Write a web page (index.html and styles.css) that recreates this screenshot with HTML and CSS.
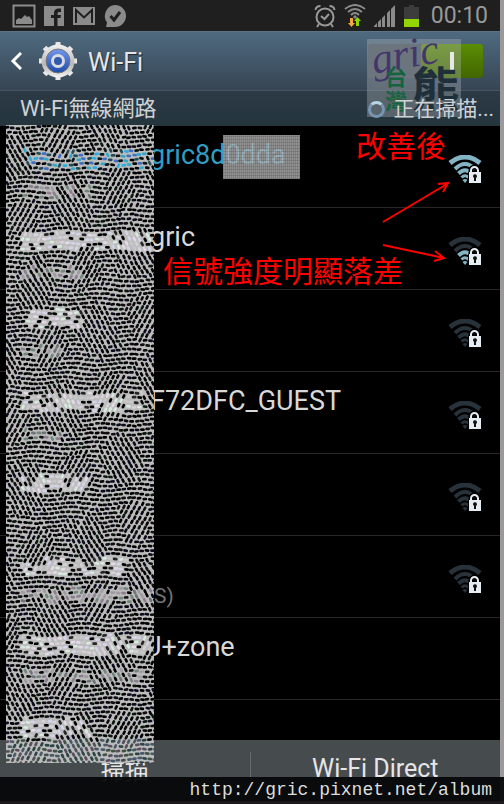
FILE: index.html
```html
<!DOCTYPE html>
<html lang="zh-Hant">
<head>
  <meta charset="UTF-8" />
  <meta name="viewport" content="width=device-width, initial-scale=1.0" />
  <title>Wi-Fi</title>
  <link rel="stylesheet" href="styles.css">
</head>
<body>
  <svg class="defs" aria-hidden="true">
    <symbol id="wifi" viewBox="0 0 34 28">
      <g fill="none">
        <path class="far" d="M2 8Q17-4 32 8" stroke-width="5" />
        <path class="far" d="M7 14Q17 4 27 14" stroke-width="4" />
        <path class="near" d="M10.500 18.500Q17 12 23.500 18.500" stroke-width="4" />
        <path class="near" d="M13.500 22.500Q17 19 20.500 22.500" stroke-width="3" />
      </g>
      <path class="dot" d="M14.500 25Q17 23 19.500 25L17 28Z" />
      <path d="M20 17h14v12H20z" fill="#000" />
      <path d="M23 18v-2.500a3.500 3.500 0 0 1 7 0V18" fill="none" stroke="#000" stroke-width="5" />
      <path d="M23 18v-2.500a3.500 3.500 0 0 1 7 0V18" fill="none" stroke="#e6edf2" stroke-width="2" />
      <path d="M21 17h12v11H21z" fill="#e6edf2" />
      <path d="M25 21.500a2 2 0 1 1 3 1.500v3h-2v-3z" fill="#111" />
    </symbol>
  </svg>

  <div class="phone">
    <div class="status">
      <div class="status-left">
        <svg width="24" height="24" viewBox="0 0 24 24"><path d="M1.500 1.500h21v21h-21z" fill="#1c1c1c" stroke="#8b8b8b" stroke-width="2" /><path d="M4 20v-4l3-2 2 1 4-4 2 2 2-1 3 4v4z" fill="#8b8b8b" /></svg>
        <svg width="22" height="22" viewBox="0 0 22 22"><path d="M1 1h20v20H1z" fill="#8b8b8b" /><path d="M11 21v-8H8v-3h3V8q0-4.500 5-4.500h2V7h-2q-1.500 0-1.500 1.500V10h3.500l-.5 3h-3v8z" fill="#1f1f1f" /></svg>
        <svg width="24" height="20" viewBox="0 0 24 20"><path d="M1 1h22v18H1z" fill="#8b8b8b" /><path d="M4 17V4l8 7.500L20 4v13" fill="none" stroke="#1f1f1f" stroke-width="2" /></svg>
        <svg width="24" height="24" viewBox="0 0 24 24"><path d="M12 1a11 11 0 1 1 0 22H3l1-4.500A11 11 0 0 1 12 1z" fill="#8b8b8b" /><path d="M7.500 12l3.500 4 6-8" fill="none" stroke="#1f1f1f" stroke-width="3" /></svg>
      </div>
      <div class="status-right">
        <svg width="22" height="24" viewBox="0 0 22 24"><g fill="none" stroke="#999" stroke-width="2"><circle cx="11" cy="13" r="8.500" /><path d="M7 12l3.500 3L15 10M1.500 6Q2 2 6.500 2M20.500 6Q20 2 15.500 2M5 20l-2 3M17 20l2 3" /></g></svg>
        <svg width="22" height="24" viewBox="0 0 22 24"><g fill="none" stroke="#8b8b8b" stroke-width="2"><path d="M1 5Q11-3 21 5M4 8Q11 2 18 8M7 11Q11 7 15 11" /></g><path d="M9 13l2-2 2 2-2 2z" fill="#8b8b8b" /><path d="M6 14h3v5h2l-3.500 4L4 19h2z" fill="#f6a43c" /><path d="M12 22v-5h-2l3.500-4 3.500 4h-2v5z" fill="#93d500" /></svg>
        <svg class="signal" width="22" height="22" viewBox="0 0 22 22"><path d="M0 22v-1l3-3v4zM4 22v-5l3-3v8zM8 22v-9l3-3v12zM13 22V8l3-3v17zM17 22V4l4-4v22z" fill="#8b8b8b" /></svg>
        <svg width="15" height="22" viewBox="0 0 15 22"><path d="M0 2h5V0h5v2h5v12H0z" fill="#3c3c3c" /><path d="M0 14h15v8H0z" fill="#93d500" /></svg>
        <span class="clock">00:10</span>
      </div>
    </div>

    <header class="header">
      <button class="back" type="button" aria-label="返回">
        <svg width="12" height="18" viewBox="0 0 12 18"><path d="M11 1L3 9l8 8" fill="none" stroke="#fff" stroke-width="3" /></svg>
      </button>
      <svg class="gear" width="40" height="40" viewBox="0 0 40 40">
        <defs>
          <linearGradient id="metal" x1="0" y1="0" x2="0" y2="1"><stop offset="0" stop-color="#f2f2f2" /><stop offset=".6" stop-color="#b9b7b5" /><stop offset="1" stop-color="#f4f4f4" /></linearGradient>
          <linearGradient id="blue" x1="0" y1="0" x2="0" y2="1"><stop offset="0" stop-color="#7397ee" /><stop offset="1" stop-color="#1c4ba8" /></linearGradient>
        </defs>
        <g stroke="#e8e8e8" stroke-width="5"><path d="M20 1v38M1 20h38M6.500 6.500l27 27M33.500 6.500l-27 27" /></g>
        <circle cx="20" cy="20" r="16.500" fill="url(#metal)" />
        <circle cx="20" cy="20" r="12" fill="url(#blue)" stroke="#777" />
        <circle cx="20" cy="20" r="5.500" fill="#315aac" stroke="#d9dbe0" stroke-width="3" />
      </svg>
      <h1>Wi-Fi</h1>
      <input class="switch" type="checkbox" aria-label="Wi-Fi" checked />
    </header>

    <div class="section">
      <h2>Wi-Fi無線網路</h2>
      <span class="scanning"><i class="spinner"></i>正在掃描...</span>
    </div>

    <ul class="networks">
      <li class="connected"><span class="name">gric8d0dda</span><svg class="wifi full"><use href="#wifi" /></svg></li>
      <li><span class="name">gric</span><svg class="wifi weak"><use href="#wifi" /></svg></li>
      <li><span class="name"></span><svg class="wifi"><use href="#wifi" /></svg></li>
      <li><span class="name">F72DFC_GUEST</span><svg class="wifi"><use href="#wifi" /></svg></li>
      <li><span class="name"></span><svg class="wifi"><use href="#wifi" /></svg></li>
      <li><span class="name"></span><small>S)</small><svg class="wifi"><use href="#wifi" /></svg></li>
      <li><span class="name under">U+zone</span></li>
      <li></li>
    </ul>

    <footer class="actions">
      <button type="button">掃描</button>
      <button type="button">Wi-Fi Direct</button>
    </footer>

    <canvas class="mask" id="mask" width="148" height="638"></canvas>
    <div class="patch"></div>

    <div class="logo">
      <span class="logo-gric">gric</span>
      <span class="logo-taiwan">台灣</span>
      <span class="logo-bear">熊</span>
    </div>

    <span class="note note-after">改善後</span>
    <span class="note note-signal">信號強度明顯落差</span>
    <svg class="arrows" width="80" height="60" viewBox="0 0 80 60">
      <g fill="none" stroke="#f00" stroke-width="2"><path d="M4 42L68 4M59 4l10-1-5 9" /></g>
    </svg>
    <svg class="arrows arrows-low" width="80" height="30" viewBox="0 0 80 30">
      <g fill="none" stroke="#f00" stroke-width="2"><path d="M4 5l61 13M56 11l9 7-10 3" /></g>
    </svg>
  </div>
  <div class="credit">http://gric.pixnet.net/album</div>

  <script src="script.js"></script>
</body>
</html>
```
FILE: styles.css
```css
* {
  box-sizing: border-box;
}
body {
  margin: 0;
  min-height: 100vh;
  background: #1b191b;
  font-family: Roboto, "Noto Sans CJK TC", sans-serif;
  color: #d8d8d8;
  position: relative;
}
.defs {
  position: absolute;
  width: 0;
  height: 0;
}
.phone {
  position: relative;
  height: calc(100vh - 3px);
  display: flex;
  flex-direction: column;
  overflow: hidden;
  background: #000;
  border-right: 4px solid #9b9999;
}
.status {
  flex: none;
  height: 31px;
  display: flex;
  justify-content: space-between;
  background: #1f1f1f;
  padding: 0 12px;
}
.status-left,
.status-right {
  display: flex;
  align-items: center;
}
.status-left {
  gap: 7px;
}
.status-right {
  gap: 8px;
}
.clock {
  font-size: 23px;
  line-height: 31px;
  color: #999;
  margin-left: 4px;
}
.header {
  flex: none;
  height: 59px;
  display: flex;
  align-items: center;
  padding: 0 17px 0 10px;
  background: linear-gradient(#4f6a80, #364553);
  border-top: 1px solid #5c7486;
}
.back {
  display: flex;
  padding: 0;
  margin-right: 16px;
  border: none;
  background: none;
}
h1,
h2 {
  margin: 0;
  font-weight: 400;
}
h1 {
  font-size: 25px;
  margin-left: 10px;
  padding-top: 2px;
  color: #e4e6e8;
  text-shadow: 1px 1px 1px #1b2733;
}
.switch {
  appearance: none;
  position: relative;
  width: 115px;
  height: 34px;
  margin: 0 0 0 auto;
  border-radius: 3px;
  background: #46515d;
}
.switch::before {
  content: "";
  position: absolute;
  inset: 0 0 0 53px;
  border-radius: 3px;
  background: linear-gradient(#5b8d05, #416600);
}
.switch::after {
  content: "";
  position: absolute;
  top: 8px;
  right: 29px;
  width: 4px;
  height: 18px;
  background: #fff;
}
.section {
  flex: none;
  height: 36px;
  display: flex;
  align-items: center;
  justify-content: space-between;
  padding: 2px 6px 0 20px;
  background: linear-gradient(#2c3a46, #24353e);
  border-top: 1px solid #465566;
  border-bottom: 1px solid #24343e;
  color: #cfd2d4;
}
h2 {
  font-size: 22px;
  line-height: 30px;
}
.scanning {
  font-size: 21px;
  line-height: 30px;
  display: flex;
  align-items: center;
  gap: 8px;
  position: relative;
  z-index: 2;
}
.spinner {
  width: 17px;
  height: 17px;
  border: 3px solid #7895b3;
  border-top-color: #b5d5e5;
  border-radius: 50%;
}
.networks {
  flex: 1;
  min-height: 0;
  overflow: hidden;
  list-style: none;
  margin: 0;
  padding: 0;
}
.networks li {
  height: 82px;
  display: grid;
  grid-template-columns: 1fr 34px;
  grid-template-rows: 34px 24px;
  align-content: start;
  padding: 12px 18px 0 150px;
  border-bottom: 1px solid #272727;
}
.name {
  font-size: 27px;
  line-height: 34px;
}
.name.under {
  margin-left: -6px;
}
.connected .name {
  color: #319dc3;
}
.networks small {
  grid-row: 2;
  font-size: 21px;
  line-height: 24px;
  padding: 2px 0 0 4px;
  color: #737373;
}
.wifi {
  grid-column: 2;
  grid-row: 1 / 3;
  width: 34px;
  height: 28px;
  margin-top: 17px;
  --far: #28323a;
  --near: #28323a;
}
.full {
  --far: #82b4c4;
  --near: #82b4c4;
}
.weak {
  --near: #82b4c4;
}
.far {
  stroke: var(--far);
}
.near {
  stroke: var(--near);
}
.dot {
  fill: var(--near);
}
.actions {
  flex: none;
  height: 61px;
  display: flex;
  background: #464b4e;
}
.actions button {
  flex: 1;
  height: 61px;
  padding: 0;
  border: none;
  background: none;
  font: 24px/58px Roboto, "Noto Sans CJK TC", sans-serif;
  color: #e6e6e6;
}
.actions button + button {
  border-left: 1px solid #65696c;
  height: 49px;
  margin-top: 12px;
  padding-bottom: 16px;
  font-size: 25px;
  line-height: 32px;
}
.mask {
  position: absolute;
  left: 6px;
  top: 125px;
}
.patch {
  position: absolute;
  left: 223px;
  top: 135px;
  width: 77px;
  height: 44px;
  background:
    repeating-linear-gradient(0deg, rgba(60, 60, 60, 0.2) 0 1px, transparent 1px 3px),
    repeating-linear-gradient(90deg, rgba(60, 60, 60, 0.2) 0 1px, transparent 1px 2px),
    rgba(190, 190, 190, 0.76);
}
.logo {
  position: absolute;
  left: 367px;
  top: 39px;
  width: 94px;
  height: 78px;
  background: rgba(180, 185, 190, 0.35);
}
.logo span {
  position: absolute;
}
.logo-gric {
  left: 4px;
  top: -7px;
  font: italic 42px/44px "Liberation Serif", serif;
  color: #43366b;
  transform: rotate(-10deg);
}
.logo-taiwan {
  left: 18px;
  top: 27px;
  width: 22px;
  font-size: 22px;
  line-height: 24px;
  font-weight: 700;
  color: #16633f;
}
.logo-bear {
  left: 45px;
  top: 27px;
  font-size: 48px;
  line-height: 50px;
  font-weight: 700;
  color: #1f303b;
}
.note {
  position: absolute;
  font-size: 30px;
  line-height: 36px;
  color: #f00;
}
.note-after {
  left: 356px;
  top: 129px;
}
.note-signal {
  left: 163px;
  top: 254px;
}
.arrows {
  position: absolute;
  left: 379px;
  top: 180px;
}
.arrows-low {
  top: 240px;
}
.credit {
  position: absolute;
  left: 0;
  right: 0;
  bottom: 3px;
  height: 24px;
  padding-right: 12px;
  background: rgba(5, 7, 8, 0.94);
  font: 18px/26px "Liberation Mono", monospace;
  text-align: right;
  color: #ddd;
}
```
FILE: script.js
```js
const canvas = document.getElementById("mask");
const ctx = canvas.getContext("2d");

// hidden names and their captions: x, y, width, height
const words = [
  [16, 25, 132, 19, "blue"], [16, 61, 68, 14, "dim"],
  [16, 106, 130, 19, "light"], [16, 142, 60, 12, "dim"],
  [16, 184, 60, 18, "light"], [16, 221, 38, 12, "dim"],
  [16, 268, 122, 18, "light"], [16, 304, 40, 12, "dim"],
  [16, 350, 66, 18, "light"],
  [16, 432, 108, 17, "light"], [16, 463, 130, 14, "dim"],
  [16, 510, 130, 20, "light"], [16, 544, 120, 14, "dim"],
  [16, 593, 68, 18, "light"]
];
const dark = ["#000", "#000", "#050509", "#120b10", "#0b160e", "#0b0b1c"];
const tones = {
  blue: ["#2aaee0", "#31a7c9", "#426fc0", "#244b55", "#0b1518", "#000", "#000"],
  dim: ["#6e7378", "#8d7f91", "#71877b", "#a09aa2", "#111", "#000", "#000"],
  light: ["#e4d9e6", "#d7eadf", "#d8d0d8", "#d4d4e8", "#c8c8c8", "#000", "#242424", "#000"],
  bar: ["#2d4447", "#4a5968", "#405245", "#594e5c"]
};

let seed = 20177;
function random() {
  seed = (seed * 48271) % 2147483647;
  return seed / 2147483647;
}

function pick(list) {
  return list[Math.floor(random() * list.length)];
}

ctx.fillStyle = "#bcbcbc";
ctx.fillRect(0, 0, 148, 638);
ctx.lineCap = "round";

for (let row = 0; row < 138; row++) {
  for (let col = 0; col < 29; col++) {
    const x = col * 5.3 + (row % 2) * 2.6 + 1 + (random() - 0.5) * 1.2;
    const y = row * 4.65 + 2 + Math.sin(x / 9 + row / 5) * 1.2 + (random() - 0.5) * 0.8;
    const word = words.find(w => x > w[0] && x < w[0] + w[2] && y > w[1] && y < w[1] + w[3]);
    const flow = Math.sin(x / 13 + y / 29) + Math.sin(y / 17 - x / 21) + random() * 0.9 - 0.3;
    const angle = flow > 0.8 ? 1.1 : flow < -0.9 ? -1.1 : (random() - 0.5) * 0.4;
    const colors = word ? tones[word[4]] : y > 615 ? tones.bar : dark;
    ctx.strokeStyle = pick(colors);
    ctx.lineWidth = 2.7;
    ctx.beginPath();
    const dx = Math.cos(angle) * 1.1;
    const dy = Math.sin(angle) * 1.1;
    ctx.moveTo(x - dx, y - dy);
    ctx.lineTo(x + dx, y + dy);
    ctx.stroke();
  }
}
```
